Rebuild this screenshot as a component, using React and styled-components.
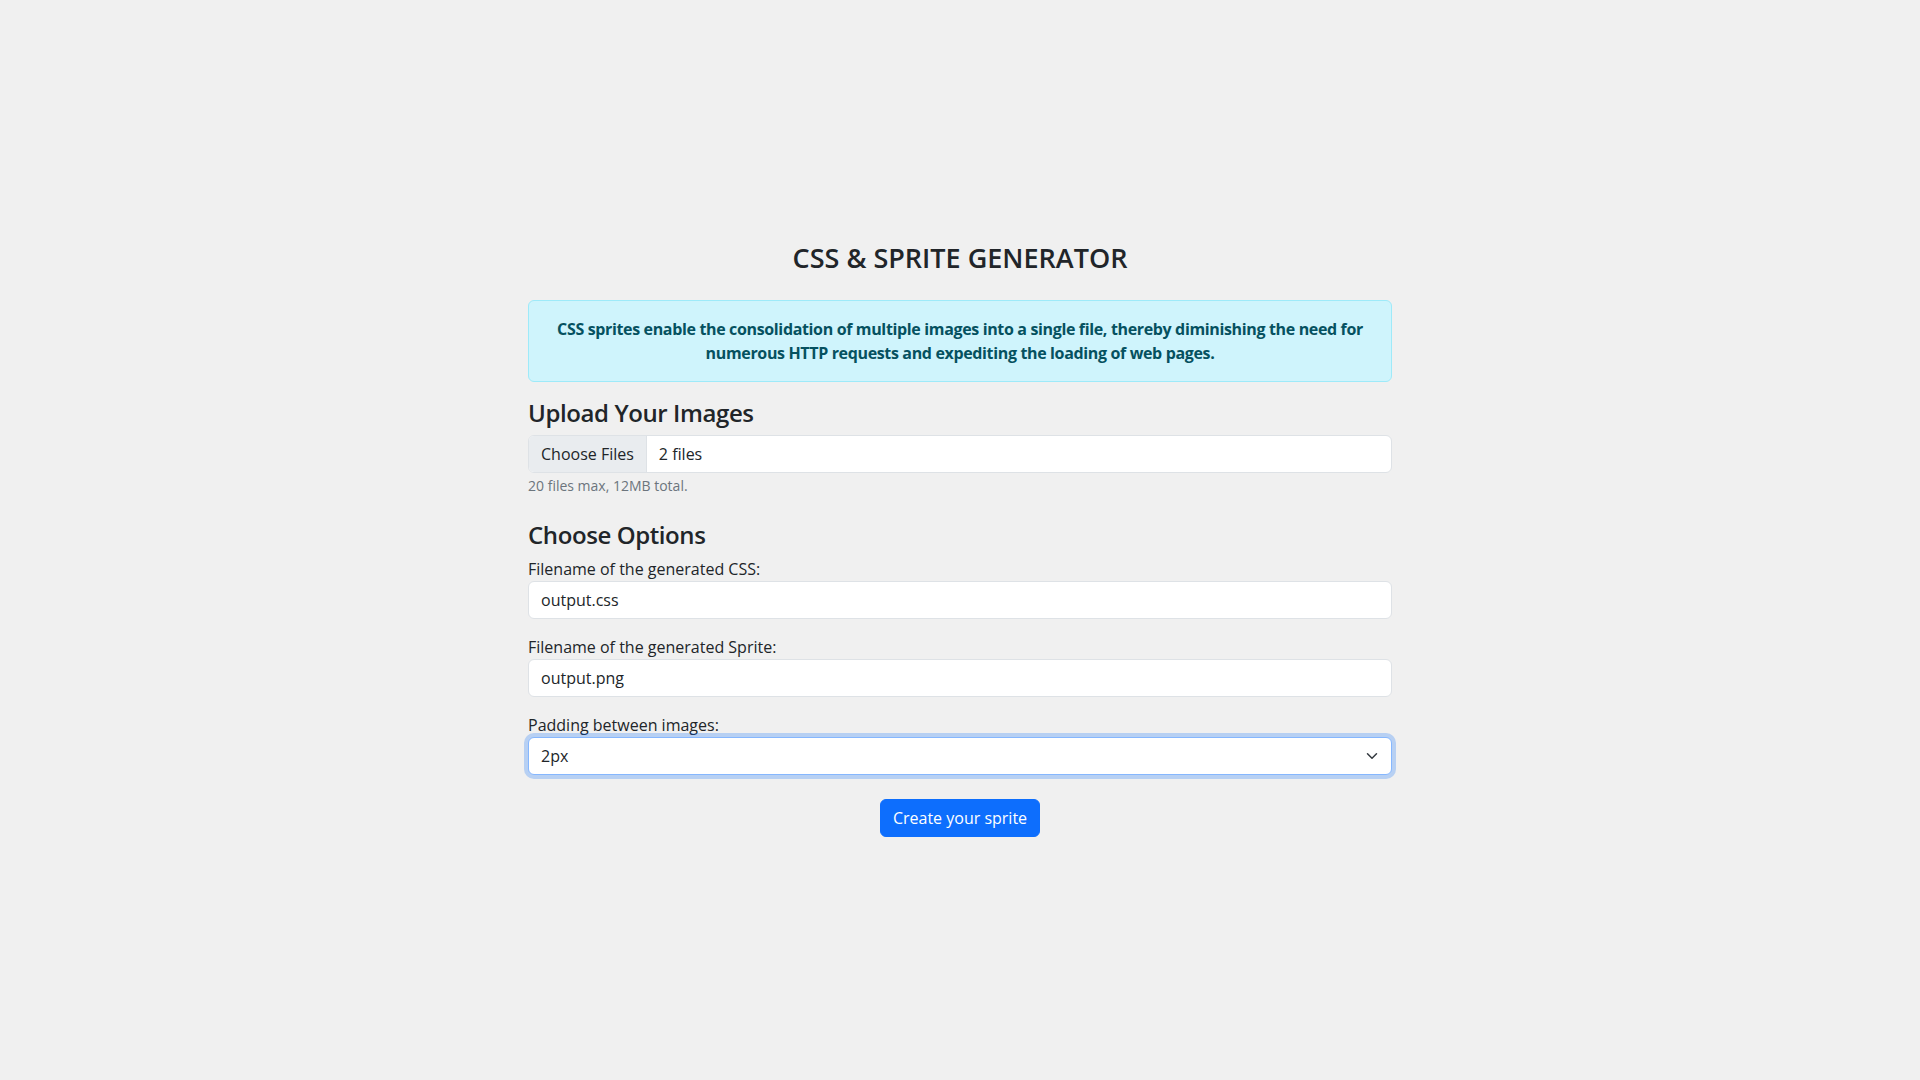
import React from "react";
import styled, { createGlobalStyle } from "styled-components";

const GlobalStyle = createGlobalStyle`
  html, body {
    margin: 0;
    padding: 0;
    background: #f0f0f0;
  }
  body {
    font-family: "Open Sans", "Noto Sans", "Liberation Sans", sans-serif;
    font-size: 16px;
    line-height: 1.5;
    color: #212529;
  }
  * {
    box-sizing: border-box;
  }
`;

const App = () => {
  return (
    <Page>
      <GlobalStyle />
      <Container>
        <Title>CSS &amp; SPRITE GENERATOR</Title>
        <Alert>
          CSS sprites enable the consolidation of multiple images into a single
          file, thereby diminishing the need for numerous HTTP requests and
          expediting the loading of web pages.
        </Alert>

        <Section>
          <SectionTitle>Upload Your Images</SectionTitle>
          <FileGroup>
            <FileButton>Choose Files</FileButton>
            <FileName>2 files</FileName>
          </FileGroup>
          <HelpText>20 files max, 12MB total.</HelpText>
        </Section>

        <Section>
          <SectionTitle>Choose Options</SectionTitle>
          <Field>
            <Label htmlFor="css-name">Filename of the generated CSS:</Label>
            <Input id="css-name" defaultValue="output.css" />
          </Field>
          <Field>
            <Label htmlFor="sprite-name">Filename of the generated Sprite:</Label>
            <Input id="sprite-name" defaultValue="output.png" />
          </Field>
          <Field>
            <Label htmlFor="padding">Padding between images:</Label>
            <SelectWrap>
              <Select id="padding" defaultValue="2px" $focused>
                <option>0px</option>
                <option>1px</option>
                <option>2px</option>
                <option>5px</option>
                <option>10px</option>
              </Select>
              <Chevron viewBox="0 0 16 16" aria-hidden="true">
                <path
                  d="M2 5l6 6 6-6"
                  fill="none"
                  stroke="#343a40"
                  strokeWidth="2"
                  strokeLinecap="round"
                  strokeLinejoin="round"
                />
              </Chevron>
            </SelectWrap>
          </Field>
        </Section>

        <Actions>
          <PrimaryButton type="button">Create your sprite</PrimaryButton>
        </Actions>
      </Container>
    </Page>
  );
};

const Page = styled.div`
  min-height: 100vh;
  padding-top: 242px;
`;

const Container = styled.main`
  width: 864px;
  margin: 0 auto;
`;

const Title = styled.h1`
  margin: 0 0 26px;
  font-size: 27px;
  line-height: 32px;
  font-weight: 600;
  text-align: center;
`;

const Alert = styled.div`
  margin-bottom: 16px;
  padding: 16px;
  background: #cff4fc;
  border: 1px solid #9eeaf9;
  border-radius: 6px;
  color: #055160;
  font-weight: 700;
  letter-spacing: -0.35px;
  text-align: center;
`;

const Section = styled.section`
  margin-bottom: 24px;
`;

const SectionTitle = styled.h2`
  margin: 0 0 8px;
  font-size: 24px;
  line-height: 29px;
  font-weight: 600;
  letter-spacing: -0.4px;
`;

const FileGroup = styled.div`
  display: flex;
  height: 38px;
  background: #fff;
  border: 1px solid #dee2e6;
  border-radius: 6px;
  overflow: hidden;
`;

const FileButton = styled.div`
  display: flex;
  align-items: center;
  padding: 0 12px;
  background: #e9ecef;
  border-right: 1px solid #dee2e6;
  color: #212529;
`;

const FileName = styled.div`
  display: flex;
  align-items: center;
  padding: 0 12px;
  color: #212529;
`;

const HelpText = styled.div`
  margin-top: 2px;
  font-size: 14px;
  line-height: 21px;
  color: #6c757d;
`;

const Field = styled.div`
  margin-bottom: 16px;

  &:last-child {
    margin-bottom: 0;
  }
`;

const Label = styled.label`
  display: block;
  line-height: 24px;
`;

const controlStyles = `
  display: block;
  width: 100%;
  height: 38px;
  padding: 6px 12px;
  font-family: inherit;
  font-size: 16px;
  line-height: 24px;
  color: #212529;
  background: #fff;
  border: 1px solid #dee2e6;
  border-radius: 6px;
  outline: none;
`;

const Input = styled.input`
  ${controlStyles}
`;

const SelectWrap = styled.div`
  position: relative;
`;

const Select = styled.select`
  ${controlStyles}
  appearance: none;
  padding-right: 36px;
  border-color: ${(p) => (p.$focused ? "#86b7fe" : "#dee2e6")};
  box-shadow: ${(p) =>
    p.$focused ? "0 0 0 4px rgba(13, 110, 253, 0.25)" : "none"};
`;

const Chevron = styled.svg`
  position: absolute;
  right: 12px;
  top: 50%;
  width: 16px;
  height: 12px;
  transform: translateY(-50%);
  pointer-events: none;
`;

const Actions = styled.div`
  display: flex;
  justify-content: center;
`;

const PrimaryButton = styled.button`
  height: 38px;
  padding: 6px 12px;
  font-family: inherit;
  font-size: 16px;
  line-height: 24px;
  color: #fff;
  background: #0d6efd;
  border: 1px solid #0d6efd;
  border-radius: 6px;
  cursor: pointer;
`;

export default App;
